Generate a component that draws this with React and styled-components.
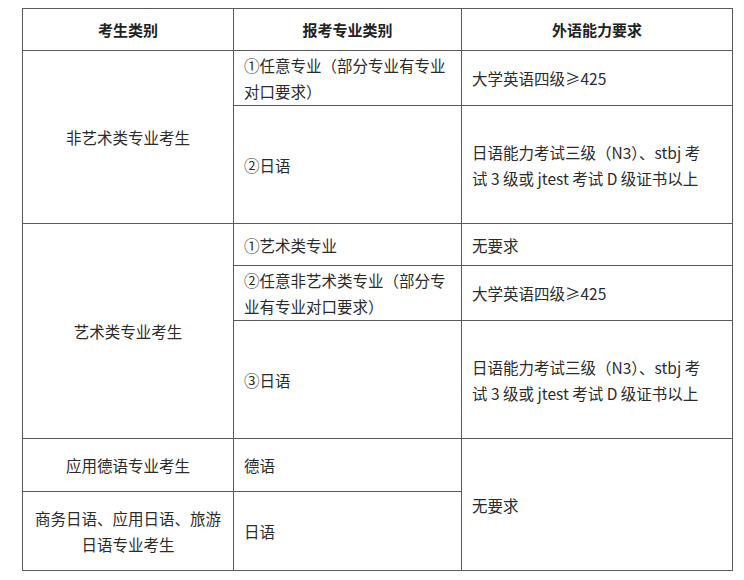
import React from 'react';
import styled, { createGlobalStyle } from 'styled-components';

const GlobalStyle = createGlobalStyle`
  html, body {
    margin: 0;
    padding: 0;
    background: #fff;
  }
  body {
    font-family: "Noto Sans CJK SC", "Liberation Sans", sans-serif;
    color: #2b2b2b;
  }
`;

const Page = styled.div`
  padding: 8px 0 0 22px;
`;

const Table = styled.table`
  border-collapse: collapse;
  table-layout: fixed;
  width: 710px;
  font-size: 15.5px;
  line-height: 26px;
`;

const Row = styled.tr`
  height: ${p => p.$h}px;
`;

const HeadCell = styled.th`
  border: 1px solid #5a5a5a;
  font-weight: 700;
  font-size: 15px;
  text-align: center;
  padding: 0 10px;
  color: #222;
`;

const Cell = styled.td`
  border: 1px solid #5a5a5a;
  padding: 0 10px;
  vertical-align: middle;
  text-align: ${p => (p.$center ? 'center' : 'left')};
`;

const App = () => (
  <>
    <GlobalStyle />
    <Page>
      <Table>
        <colgroup>
          <col style={{ width: 211 }} />
          <col style={{ width: 228 }} />
          <col style={{ width: 271 }} />
        </colgroup>
        <thead>
          <Row $h={42}>
            <HeadCell>考生类别</HeadCell>
            <HeadCell>报考专业类别</HeadCell>
            <HeadCell>外语能力要求</HeadCell>
          </Row>
        </thead>
        <tbody>
          <Row $h={55}>
            <Cell $center rowSpan={2}>非艺术类专业考生</Cell>
            <Cell>①任意专业（部分专业有专业<br />对口要求）</Cell>
            <Cell>大学英语四级≥425</Cell>
          </Row>
          <Row $h={118}>
            <Cell>②日语</Cell>
            <Cell>日语能力考试三级（N3）、stbj 考<br />试 3 级或 jtest 考试 D 级证书以上</Cell>
          </Row>
          <Row $h={42}>
            <Cell $center rowSpan={3}>艺术类专业考生</Cell>
            <Cell>①艺术类专业</Cell>
            <Cell>无要求</Cell>
          </Row>
          <Row $h={55}>
            <Cell>②任意非艺术类专业（部分专<br />业有专业对口要求）</Cell>
            <Cell>大学英语四级≥425</Cell>
          </Row>
          <Row $h={118}>
            <Cell>③日语</Cell>
            <Cell>日语能力考试三级（N3）、stbj 考<br />试 3 级或 jtest 考试 D 级证书以上</Cell>
          </Row>
          <Row $h={53}>
            <Cell $center>应用德语专业考生</Cell>
            <Cell>德语</Cell>
            <Cell rowSpan={2}>无要求</Cell>
          </Row>
          <Row $h={79}>
            <Cell $center>商务日语、应用日语、旅游<br />日语专业考生</Cell>
            <Cell>日语</Cell>
          </Row>
        </tbody>
      </Table>
    </Page>
  </>
);

export default App;
